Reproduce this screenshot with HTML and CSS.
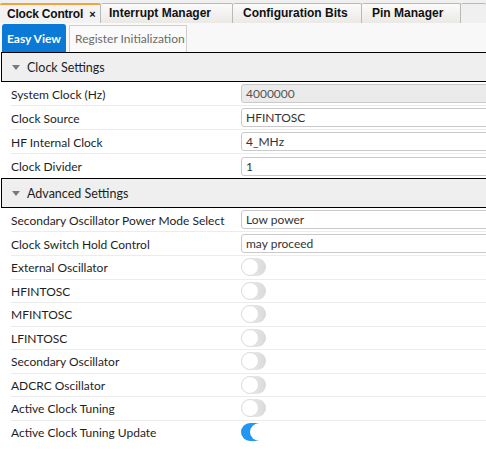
FILE: index.html
```html
<!DOCTYPE html>
<html>
<head>
<meta charset="utf-8">
<link rel="stylesheet" href="styles.css">
</head>
<body>
<div class="tabstrip">
  <div class="tab active w1">Clock Control <span class="close">×</span></div>
  <div class="tab w2">Interrupt Manager</div>
  <div class="tab w3">Configuration Bits</div>
  <div class="tab w4">Pin Manager</div>
  <div class="tab w5"></div>
</div>
<div class="subtabs">
  <div class="subtab on">Easy View</div>
  <div class="subtab">Register Initialization</div>
</div>
<div class="panel">
  <div class="section"><span class="tri"></span>Clock Settings</div>
  <div class="row"><div class="label">System Clock (Hz)</div><div class="val"><div class="input disabled">4000000</div></div></div>
  <div class="row"><div class="label">Clock Source</div><div class="val"><div class="input">HFINTOSC</div></div></div>
  <div class="row"><div class="label">HF Internal Clock</div><div class="val"><div class="input">4_MHz</div></div></div>
  <div class="row last"><div class="label">Clock Divider</div><div class="val"><div class="input">1</div></div></div>
  <div class="section"><span class="tri"></span>Advanced Settings</div>
  <div class="row"><div class="label">Secondary Oscillator Power Mode Select</div><div class="val"><div class="input">Low power</div></div></div>
  <div class="row"><div class="label">Clock Switch Hold Control</div><div class="val"><div class="input">may proceed</div></div></div>
  <div class="row t"><div class="label">External Oscillator</div><div class="val"><span class="toggle"><span class="knob"></span></span></div></div>
  <div class="row t"><div class="label">HFINTOSC</div><div class="val"><span class="toggle"><span class="knob"></span></span></div></div>
  <div class="row t"><div class="label">MFINTOSC</div><div class="val"><span class="toggle"><span class="knob"></span></span></div></div>
  <div class="row t"><div class="label">LFINTOSC</div><div class="val"><span class="toggle"><span class="knob"></span></span></div></div>
  <div class="row t"><div class="label">Secondary Oscillator</div><div class="val"><span class="toggle"><span class="knob"></span></span></div></div>
  <div class="row t"><div class="label">ADCRC Oscillator</div><div class="val"><span class="toggle"><span class="knob"></span></span></div></div>
  <div class="row t"><div class="label">Active Clock Tuning</div><div class="val"><span class="toggle"><span class="knob"></span></span></div></div>
  <div class="row t last"><div class="label">Active Clock Tuning Update</div><div class="val"><span class="toggle on"><span class="knob"></span></span></div></div>
</div>
</body>
</html>
```
FILE: styles.css
```css
html, body {
  margin: 0;
  padding: 0;
  width: 486px;
  height: 454px;
  overflow: hidden;
  background: #ffffff;
  font-family: "Lato", "Liberation Sans", sans-serif;
  font-size: 12px;
  color: #1e1e1e;
}

.tabstrip {
  height: 23px;
  background: #f0f0f0;
  display: flex;
  align-items: flex-end;
  box-sizing: border-box;
  padding-top: 3px;
}

.tab {
  flex: none;
  box-sizing: border-box;
  height: 20px;
  padding-left: 8px;
  font-family: "Liberation Sans", Arial, sans-serif;
  font-weight: bold;
  font-size: 12px;
  line-height: 19px;
  color: #111;
  border: 1px solid #b9b9b9;
  border-bottom: none;
  border-left: none;
  border-radius: 2px 2px 0 0;
  background: linear-gradient(#fbfbfa, #ebe9e6);
  white-space: nowrap;
  overflow: hidden;
}

.tab.active {
  background: #f3f3f3;
  border-top: 2px solid #f0a33a;
  line-height: 18px;
  padding-left: 7px;
  letter-spacing: -0.2px;
}

.close {
  font-size: 11px;
  margin-left: 3px;
  letter-spacing: 0;
}

.w1 { width: 101px; }
.w2 { width: 132px; }
.w3 { width: 129px; padding-left: 10px; }
.w4 { width: 99px; padding-left: 10px; }
.w5 { flex: 1; background: #f0f0f0; border-right: none; }

.subtabs {
  height: 29px;
  background: #f8f8f9;
  display: flex;
  align-items: flex-end;
  gap: 3px;
  padding-left: 2px;
  box-sizing: border-box;
}

.subtab {
  flex: none;
  box-sizing: border-box;
  height: 27px;
  padding: 0 0 0 5px;
  line-height: 25px;
  border: 1px solid #cfcfcf;
  border-bottom: none;
  background: #fafafa;
  color: #6a6a6a;
  font-size: 12px;
  width: 118px;
  white-space: nowrap;
}

.subtab.on {
  height: 28px;
  width: 64px;
  padding-left: 4px;
  background: #0a7ad6;
  border-color: #0a7ad6;
  color: #fff;
  font-weight: bold;
  border-radius: 3px 3px 0 0;
  line-height: 27px;
}

.panel {
  background: #fff;
}

.section {
  box-sizing: border-box;
  height: 30px;
  border: 1px solid #000;
  border-right: none;
  margin-left: 1px;
  background: #efefef;
  display: flex;
  align-items: center;
  font-size: 12.5px;
  color: #1e1e1e;
}

.tri {
  width: 0;
  height: 0;
  border-left: 4px solid transparent;
  border-right: 4px solid transparent;
  border-top: 5px solid #7a7a7a;
  margin-left: 10px;
  margin-right: 7px;
}

.row {
  display: grid;
  grid-template-columns: 230px 1fr;
  margin-left: 11px;
  height: 24px;
  box-sizing: border-box;
  border-bottom: 1px solid #ececec;
  align-items: center;
}

.row.t {
  height: 23.5px;
}

.row.last {
  border-bottom: none;
}

.label {
  white-space: nowrap;
  padding-top: 1px;
}

.val {
  overflow: hidden;
  height: 100%;
  display: flex;
  align-items: center;
}

.input {
  box-sizing: border-box;
  width: 270px;
  height: 19px;
  border: 1px solid #c9c9c9;
  border-radius: 3px;
  padding-left: 4px;
  line-height: 17px;
  color: #333;
  background: #fff;
  flex: none;
}

.input.disabled {
  background: #ebebeb;
  color: #555;
}

.toggle {
  position: relative;
  display: block;
  width: 25px;
  height: 18px;
  border-radius: 9px;
  background: linear-gradient(90deg, #f4f4f4, #d9d9d9);
  flex: none;
}

.knob {
  position: absolute;
  left: 0;
  top: 0;
  width: 18px;
  height: 18px;
  box-sizing: border-box;
  border-radius: 50%;
  background: #fff;
  border: 1px solid #dcdcdc;
}

.toggle.on {
  background: #2196f3;
}

.toggle.on .knob {
  left: 9px;
  border: none;
  width: 19px;
}
```
